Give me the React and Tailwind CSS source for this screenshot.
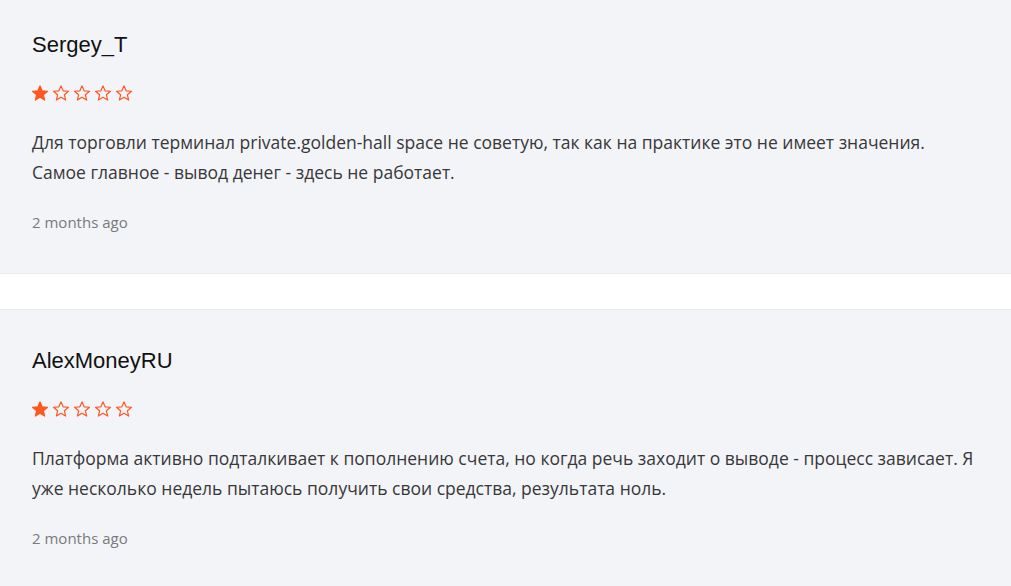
import React from 'react';

const reviews = [
    {
        name: 'Sergey_T',
        rating: 1,
        text: 'Для торговли терминал private.golden-hall space не советую, так как на практике это не имеет значения. Самое главное - вывод денег - здесь не работает.',
        date: '2 months ago',
    },
    {
        name: 'AlexMoneyRU',
        rating: 1,
        text: 'Платформа активно подталкивает к пополнению счета, но когда речь заходит о выводе - процесс зависает. Я уже несколько недель пытаюсь получить свои средства, результата ноль.',
        date: '2 months ago',
    },
];

const Star = ({ filled }) => (
    <svg width="18" height="18" viewBox="0 0 24 24" className="block">
        <path
            d="M12 2.5l2.85 6.6 7.15.6-5.45 4.7 1.65 7-6.2-3.75-6.2 3.75 1.65-7L2 9.7l7.15-.6z"
            fill={filled ? '#ff5722' : 'none'}
            stroke="#ff5722"
            strokeWidth="1.6"
            strokeLinejoin="round"
        />
    </svg>
);

const ReviewCard = ({ review }) => {
    return (
        <div className="bg-[#f3f4f8] border-y border-[#e9eaee] pt-[38px] pb-[41px] px-8">
            <h3 className="text-[22px] leading-[26px] text-[#111] font-['Liberation_Sans',Arial,sans-serif]">
                {review.name}
            </h3>
            <div className="flex gap-[3px] mt-[26px] -ml-[1px]">
                {[1, 2, 3, 4, 5].map((i) => (
                    <Star key={i} filled={i <= review.rating} />
                ))}
            </div>
            <p className="mt-[25px] text-[17.5px] leading-[30px] text-[#383838] font-['Open_Sans',sans-serif]">
                {review.text}
            </p>
            <div className="mt-[25px] text-[15px] leading-5 text-[#7a7a7a] font-['Open_Sans',sans-serif]">
                {review.date}
            </div>
        </div>
    );
};

const App = () => {
    return (
        <div className="bg-white min-h-screen overflow-hidden">
            <div className="-mt-[7px] flex flex-col gap-[35px]">
                {reviews.map((r) => (
                    <ReviewCard key={r.name} review={r} />
                ))}
            </div>
        </div>
    );
};

export default App;
